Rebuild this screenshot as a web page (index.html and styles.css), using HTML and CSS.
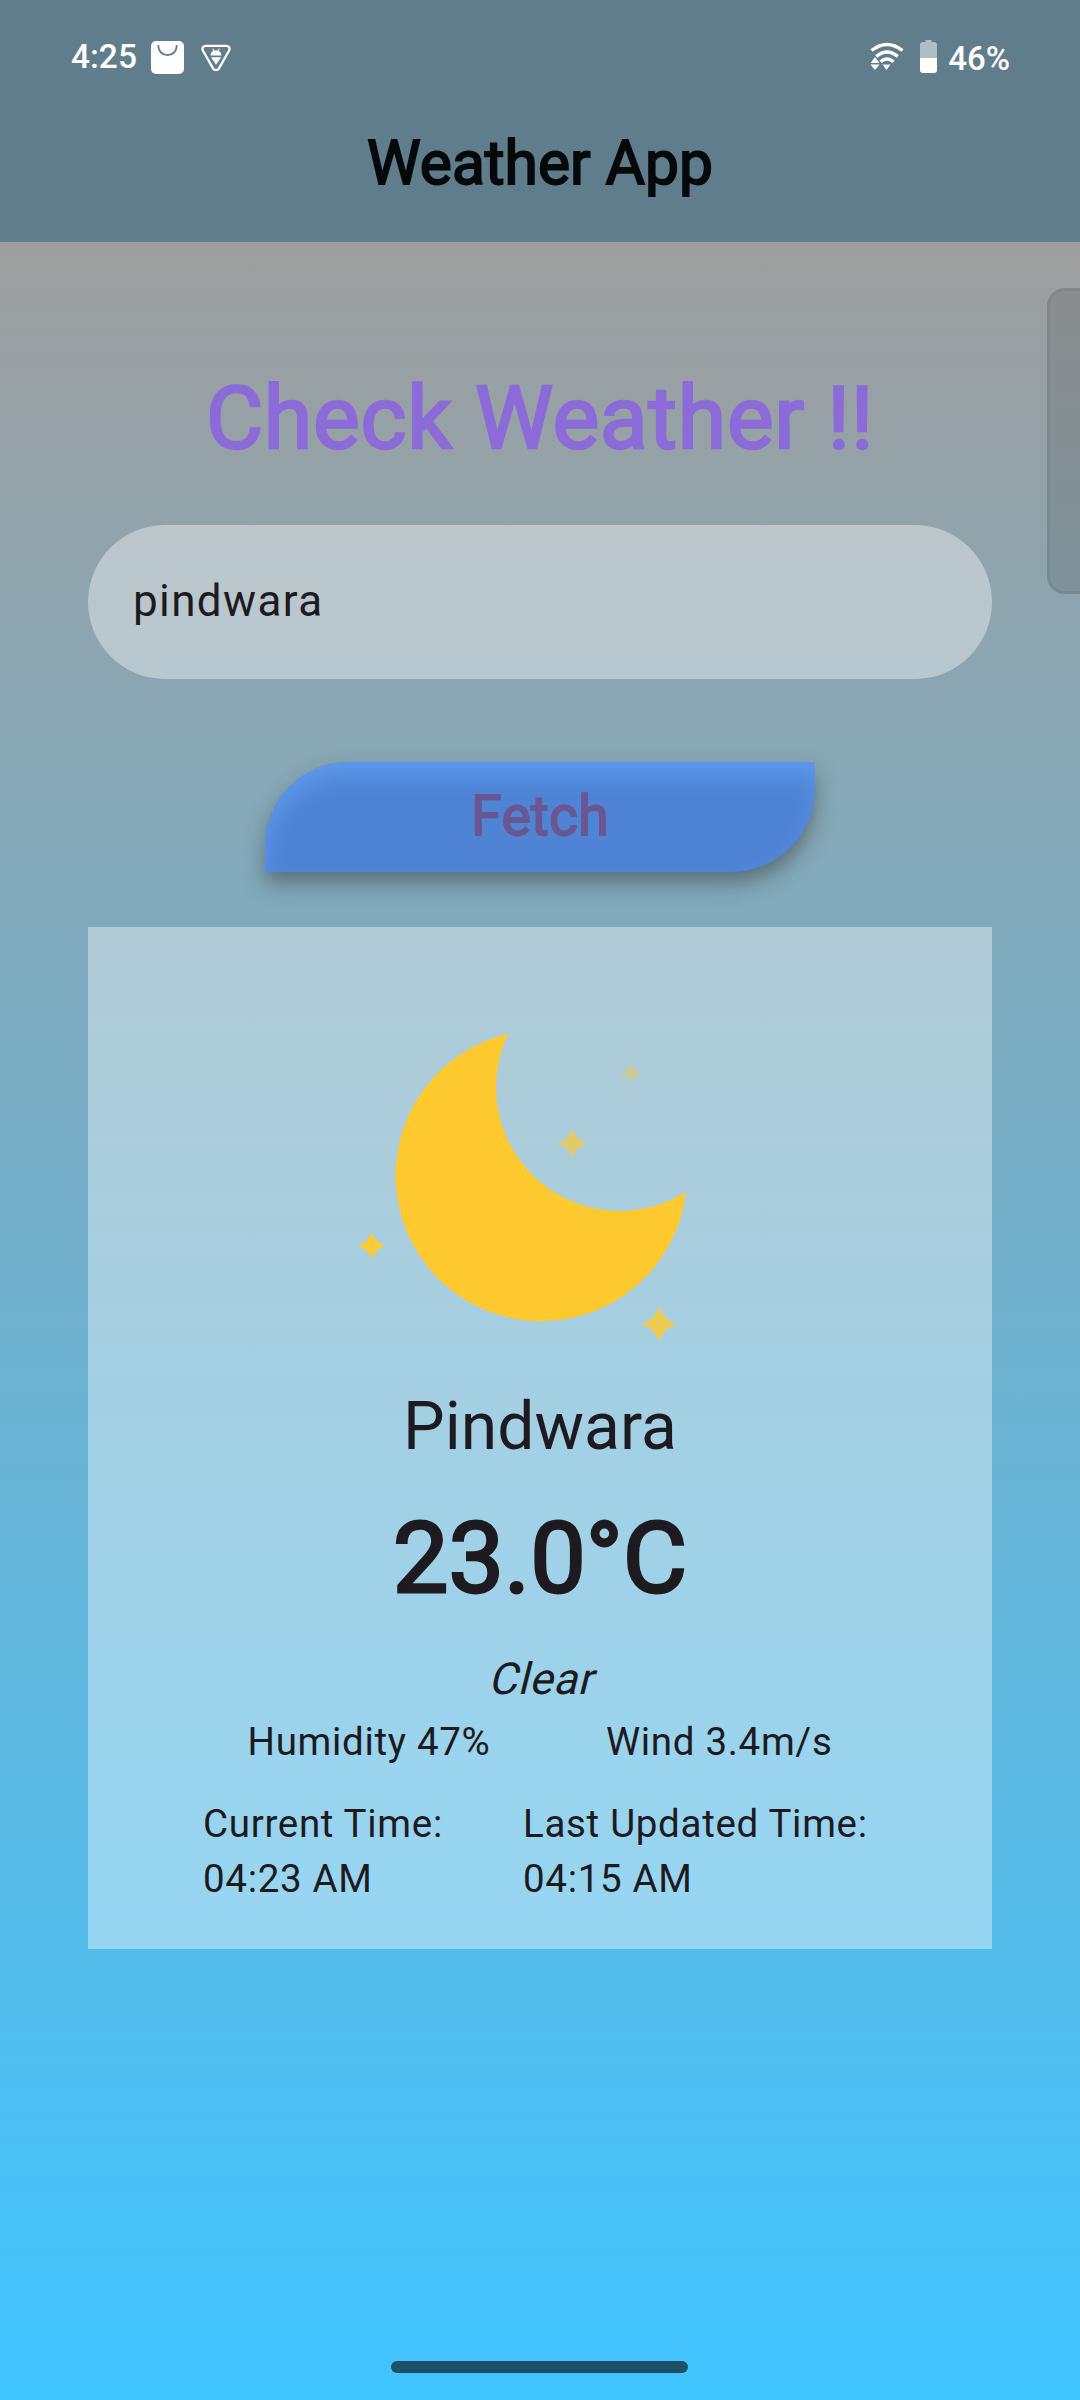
FILE: index.html
```html
<!DOCTYPE html>
<html lang="en">
<head>
<meta charset="utf-8">
<title>Weather App</title>
<link rel="stylesheet" href="styles.css">
</head>
<body>
<div class="screen">
  <header class="app-bar">
    <div class="status">
      <div class="status-left">
        <span class="clock">4:25</span>
        <svg class="bag" viewBox="0 0 33 33"><rect width="33" height="33" rx="5" fill="#fff"/><path d="M7.300 4v1a9.200 9.200 0 0 0 18.400 0V4" fill="none" stroke="#607d8b" stroke-width="1.800"/></svg>
        <svg class="shield" viewBox="0 0 30 28"><path d="M4.500 1.800h21c2.600 0 3.700 2.500 2.600 4.700L18 24.300c-1.500 2.400-4.500 2.400-6 0L1.900 6.500C.8 4.300 1.900 1.800 4.500 1.800z" fill="none" stroke="#fff" stroke-width="2.300"/><path d="M9.500 11.500c0-2.500 1.300-4 3-4.600L11.200 5l.8-.5L13.500 6.500h3L18 4.500l.8.500-1.300 1.900c1.700.6 3 2.100 3 4.600zM10 13.200h10.200L15 20.800z" fill="#fff"/></svg>
      </div>
      <div class="status-right">
        <svg class="wifi" viewBox="0 0 34 29"><g fill="none" stroke="#fff" stroke-width="3.400"><path d="M1.500 8.500Q17 -3.500 32.500 8.500"/><path d="M6.300 14.500Q17 5.500 27.700 14.500"/><path d="M10.500 19.800Q17 14.200 23.500 19.800"/></g><path d="M5 15l4.500 6h-9zM.5 22.500h9L5 28zM12.500 22.500h8l-4 5.500z" fill="#fff"/></svg>
        <svg class="battery" viewBox="0 0 17 33"><path d="M5.500 0h6v2H14q3 0 3 3v13H0V5q0-3 3-3h2.500z" fill="#b0bec5"/><path d="M0 18h17v12q0 3-3 3H3q-3 0-3-3z" fill="#fff"/></svg>
        <span class="percent">46%</span>
      </div>
    </div>
    <h1 class="title">Weather App</h1>
  </header>
  <main class="content">
    <h2 class="heading">Check Weather !!</h2>
    <input class="city-input" type="text" value="pindwara" aria-label="City">
    <button class="fetch" type="button">Fetch</button>
    <section class="card">
      <svg class="moon" viewBox="0 0 1140 1050">
        <defs><path id="star" d="M0-1Q.27-.27 1 0Q.27.27 0 1Q-.27.27-1 0Q-.27-.27 0-1z"/></defs>
        <g fill="#ffc92f">
          <path d="M505 71A437 437 0 1 0 1038 545A370.800 370.800 0 0 1 505 71z"/>
          <use href="#star" transform="translate(95 707) scale(40)" opacity=".95"/>
          <use href="#star" transform="translate(957 942) scale(52)" opacity=".8"/>
          <use href="#star" transform="translate(697 400) scale(43)" opacity=".66"/>
          <use href="#star" transform="translate(873 189) scale(31)" opacity=".37"/>
        </g>
      </svg>
      <div class="city">Pindwara</div>
      <div class="temp">23.0°C</div>
      <div class="condition">Clear</div>
      <div class="stats"><span>Humidity 47%</span><span>Wind 3.4m/s</span></div>
      <div class="times">
        <div>Current Time:<br>04:23 AM</div>
        <div>Last Updated Time:<br>04:15 AM</div>
      </div>
    </section>
  </main>
  <div class="edge-panel"></div>
  <div class="home-bar"></div>
</div>
</body>
</html>
```
FILE: styles.css
```css
* { box-sizing: border-box; }
body { margin: 0; font-family: Roboto, sans-serif; color: #1d1b20; }
.screen { position: relative; width: 1080px; height: 2400px; overflow: hidden; display: flex; flex-direction: column; }
.app-bar { height: 242px; background: #607d8b; display: flex; flex-direction: column; flex: none; }
.status { height: 113px; display: flex; justify-content: space-between; padding: 0 70px 0 71px; color: #fff; font-size: 33.5px; font-weight: 500; line-height: 40px; }
.status-left, .status-right { display: flex; align-items: flex-start; }
.clock { margin-top: 37px; width: 80px; }
.bag { width: 33px; height: 33px; margin-top: 41px; }
.shield { width: 30px; height: 28px; margin: 44px 0 0 17px; }
.wifi { width: 34px; height: 29px; margin-top: 42px; }
.battery { width: 17px; height: 33px; margin: 40px 11px 0 16px; }
.percent { margin-top: 39px; font-size: 33px; }
.title { margin: 0; text-align: center; font-size: 60.5px; line-height: 102px; font-weight: 400; color: #06090a; -webkit-text-stroke: 1.9px #06090a; }
.content { flex: 1; display: flex; flex-direction: column; align-items: center; background: linear-gradient(#9e9e9e, #40c4ff); }
.heading { margin: 123px 0 0; font-size: 88px; line-height: 106px; font-weight: 400; letter-spacing: .69px; color: #8a6bd8; -webkit-text-stroke: 2.5px #8a6bd8; }
.city-input { width: 904px; height: 154px; margin: 54px 0 0; padding: 0 44px 2px 45px; border: 0; border-radius: 77px; background: rgba(255,255,255,.384); font: 44px Roboto, sans-serif; letter-spacing: 1.375px; color: #1d1b20; outline: 0; }
.fetch { width: 550px; height: 110px; margin: 83px 0 0; padding: 0 0 2px; border: 0; border-radius: 84px 0 84px 0; background: #4f84d5; box-shadow: 0 11px 20px rgba(60,70,65,.55), inset 0 14px 24px -4px #609bf0; font: 400 55px/108px Roboto, sans-serif; letter-spacing: .275px; color: #6a5691; -webkit-text-stroke: 1.8px #6a5691; }
.card { width: 904px; height: 1022px; margin-top: 55px; background: rgba(255,255,255,.384); display: flex; flex-direction: column; align-items: center; }
.moon { width: 380px; height: 350px; margin: 83px 20px 0 0; }
.city { margin-top: 27px; font-size: 66px; line-height: 80px; }
.temp { margin-top: 31px; font-size: 99px; line-height: 120px; -webkit-text-stroke: 2.8px #1d1b20; }
.condition { margin-top: 34px; font-size: 44px; line-height: 54px; letter-spacing: .69px; transform: skewX(-14deg); transform-origin: 50% 42px; }
.stats { width: 585px; margin-top: 8px; display: flex; justify-content: space-between; }
.stats, .times { font-size: 38.5px; line-height: 55px; letter-spacing: .69px; }
.times { align-self: stretch; margin: 27px 0 0 115px; display: grid; grid-template-columns: 320px 1fr; }
.edge-panel { position: absolute; top: 288px; left: 1047px; width: 60px; height: 306px; border: 3px solid rgba(0,0,0,.06); border-radius: 18px; background: rgba(0,0,0,.11); }
.home-bar { position: absolute; left: 391px; top: 2361px; width: 297px; height: 12px; border-radius: 6px; background: #1c5066; }
```
